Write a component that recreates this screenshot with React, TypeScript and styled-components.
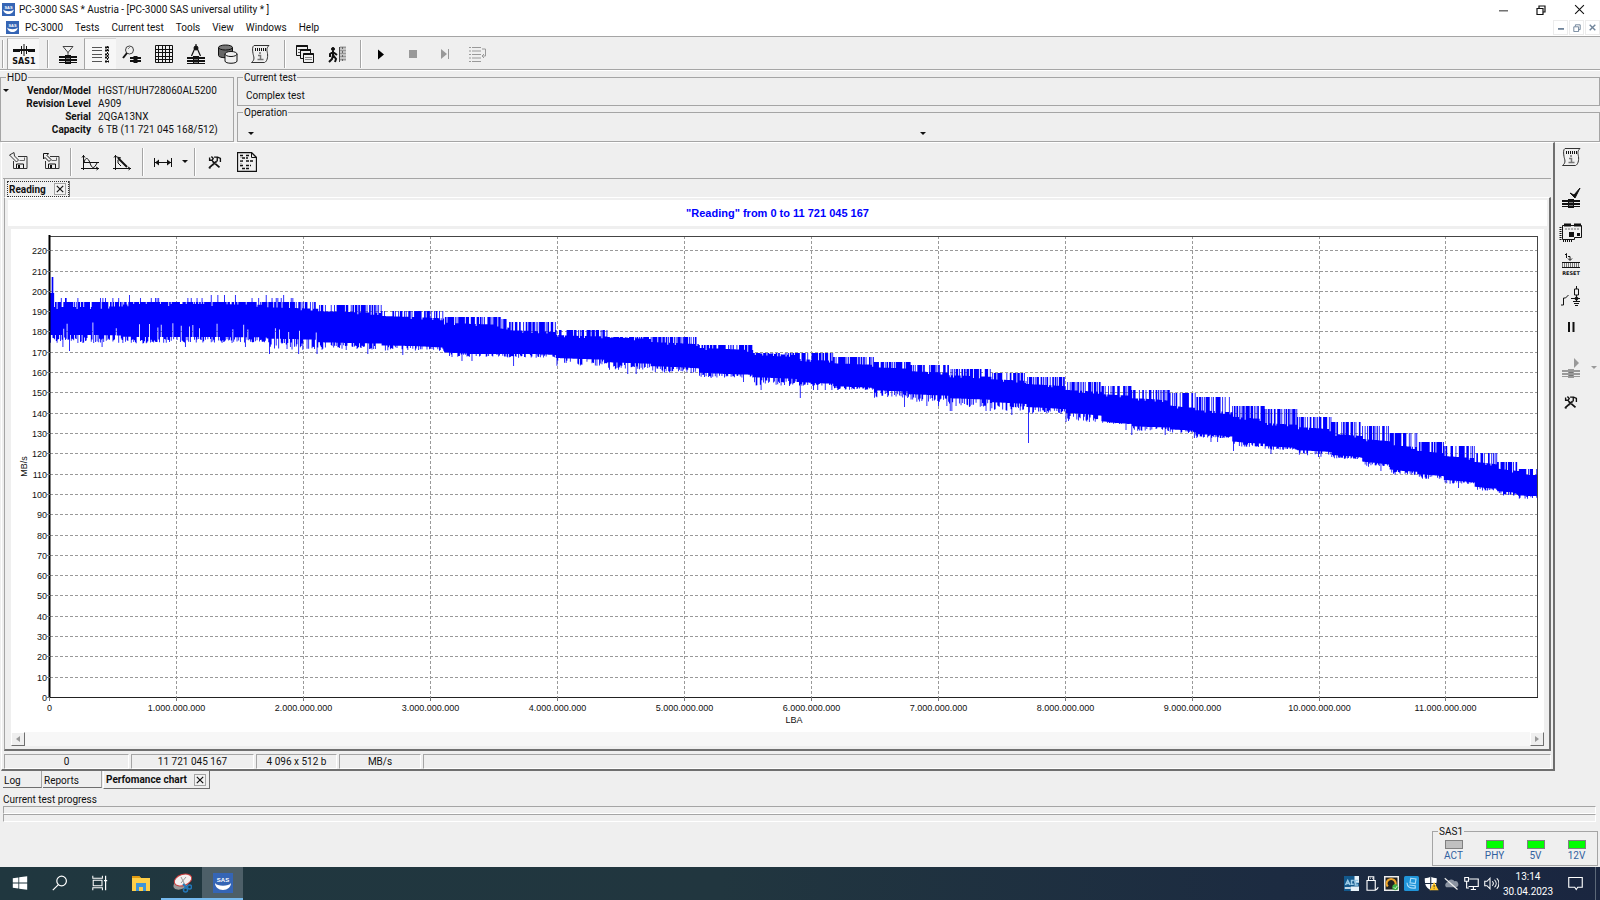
import React, { useLayoutEffect, useMemo, useRef, useState } from 'react';
import styled, { createGlobalStyle, css } from 'styled-components';

const UI = 'Roboto, "Open Sans", sans-serif';
const PLOT_FONT = '"Liberation Sans", Arial, sans-serif';
const FACE = '#efefef';
const LINE = '#a5a5a5';
const DARK = '#6f6f6f';

const GlobalStyle = createGlobalStyle`
  *, *::before, *::after { box-sizing: border-box; }
  body { margin: 0; background: ${FACE}; font-family: ${UI}; font-size: 10px; line-height: 13px; color: #111; }
  button, input { font: inherit; color: inherit; }
  button { border: 0; background: none; padding: 0; margin: 0; }
`;

const Window = styled.div`
  display: flex;
  flex-direction: column;
  min-height: 100vh;
`;

/* ---------- title and menu ---------- */
const TitleBar = styled.header`
  display: flex;
  align-items: center;
  height: 19px;
  padding: 0 4px 0 2px;
  gap: 4px;
  background: #fff;
`;
const Title = styled.h1`
  flex: 1;
  margin: 0;
  font-size: 10px;
  font-weight: 400;
`;
const WindowButton = styled.button`
  display: grid;
  place-items: center;
  width: 38px;
  height: 18px;
`;
const WindowButtons = styled.div`
  display: flex;
  margin-right: -2px;
`;
const MenuBar = styled.nav`
  display: flex;
  align-items: center;
  height: 17px;
  padding: 0 0 0 6px;
  background: #fff;
`;
const MenuItem = styled.button`
  padding: 0 6px;
  white-space: nowrap;
`;
const MdiButtons = styled.div`
  display: flex;
  gap: 1px;
  margin-left: auto;
`;
const MdiButton = styled.button`
  display: grid;
  place-items: center;
  width: 15px;
  height: 15px;
  border: 1px solid #ececec;
  color: #70849a;
`;

/* ---------- toolbars ---------- */
const ToolBar = styled.div`
  display: flex;
  align-items: center;
  height: 35px;
  border-top: 1px solid ${LINE};
  border-bottom: 1px solid #fff;
  box-shadow: inset 0 -1px 0 ${LINE};
  padding: 1px 0 1px 1px;
`;
const ToolGroup = styled.div`
  display: flex;
  align-items: center;
`;
const Divider = styled.div<{ $before?: number }>`
  width: 2px;
  height: 28px;
  margin: 0 3px 0 ${(p) => p.$before ?? 3}px;
  border-left: 1px solid ${LINE};
  border-right: 1px solid #fff;
`;
const ToolButton = styled.button<{ $pressed?: boolean; $width?: number }>`
  display: grid;
  place-items: center;
  width: ${(p) => p.$width ?? 32}px;
  height: 31px;
  ${(p) =>
    p.$pressed &&
    css`
      background: #f7f7f7;
      border-left: 1px solid ${LINE};
      border-top: 1px solid #d4d4d4;
    `}
`;

/* ---------- drive information ---------- */
const InfoRow = styled.section`
  display: flex;
  gap: 3px;
  height: 71px;
`;
const InfoColumn = styled.div`
  display: flex;
  flex: 1;
  flex-direction: column;
`;
const Group = styled.fieldset<{ $width?: number; $height: number }>`
  position: relative;
  width: ${(p) => (p.$width ? `${p.$width}px` : 'auto')};
  height: ${(p) => p.$height}px;
  min-width: 0;
  margin: 0;
  padding: 0 6px;
  border: 1px solid ${LINE};
`;
const Legend = styled.legend`
  padding: 0 1px;
  margin-left: -1px;
  line-height: 13px;
`;
const DriveGrid = styled.dl`
  display: grid;
  grid-template-columns: 84px 1fr;
  column-gap: 7px;
  margin: 0;
  dt { font-weight: 700; text-align: right; white-space: nowrap; }
  dd { margin: 0; white-space: nowrap; }
`;
const DropMark = styled.button`
  position: absolute;
  left: 1px;
  top: 3px;
  width: 8px;
  height: 8px;
  display: grid;
  place-items: center;
`;
const TestName = styled.div`
  padding: 5px 2px;
`;
const OperationRow = styled.div`
  display: grid;
  grid-template-columns: 1fr 1fr;
  padding: 13px 1px 0 4px;
`;

/* ---------- work area ---------- */
const Body = styled.main`
  display: flex;
  flex: 1;
`;
const Panel = styled.section`
  display: flex;
  flex: 1;
  flex-direction: column;
  min-width: 0;
  border: 2px solid ${DARK};
  border-top: 1px solid #fff;
  border-left: 1px solid #fff;
  padding: 0 2px;
  margin-left: 1px;
`;
const ChartTools = styled.div`
  display: flex;
  align-items: center;
  height: 36px;
  padding-top: 3px;
  margin-left: -1px;
  border-bottom: 1px solid ${LINE};
`;
const ChartTabs = styled.div`
  display: flex;
  height: 18px;
  padding: 2px 3px 0 2px;
  border-left: 1px solid ${LINE};
`;
const ChartTab = styled.div`
  display: flex;
  align-items: center;
  gap: 8px;
  padding: 0 2px 0 1px;
  border: 1px dotted #333;
  box-shadow: 1px 0 0 ${DARK};
  font-weight: 700;
`;
const CloseButton = styled.button`
  display: grid;
  place-items: center;
  width: 12px;
  height: 12px;
  border: 1px solid ${LINE};
  background: #f3f3f3;
`;
const ChartFrame = styled.div`
  display: flex;
  flex: 1;
  flex-direction: column;
  padding: 2px 2px 3px 3px;
  border: 2px solid ${DARK};
  border-left: 1px solid ${LINE};
  border-top: 1px solid #fff;
`;
const ChartTitle = styled.h2`
  margin: 0;
  height: 26px;
  background: #fff;
  color: #0000ff;
  font: 700 11px/26px ${PLOT_FONT};
  text-align: center;
`;
const PlotArea = styled.div`
  flex: 1;
  min-height: 160px;
  margin: 3px 3px 0;
  background: #fff;
  contain: size;
`;
const PlotSvg = styled.svg`
  display: block;
`;
const ScrollTrack = styled.div`
  display: flex;
  justify-content: space-between;
  height: 14px;
  margin: 0 3px;
  background: #f7f7f7;
`;
const ScrollButton = styled.button`
  display: grid;
  place-items: center;
  width: 14px;
  height: 14px;
  background: ${FACE};
  border: 1px solid #fff;
  border-right-color: ${DARK};
  border-bottom-color: ${DARK};
`;
const StatusBar = styled.footer`
  display: flex;
  gap: 2px;
  height: 15px;
  margin-top: 3px;
`;
const StatusCell = styled.div<{ $width?: number }>`
  flex: ${(p) => (p.$width ? `0 0 ${p.$width}px` : '1')};
  border: 1px solid ${LINE};
  border-right-color: #fff;
  border-bottom-color: #fff;
  text-align: center;
`;
const SideBar = styled.aside`
  display: flex;
  flex-direction: column;
  align-items: flex-start;
  width: 45px;
  border-top: 1px solid #fff;
`;
const SideButton = styled.button<{ $height: number; $wide?: boolean }>`
  display: flex;
  align-items: center;
  justify-content: center;
  width: 32px;
  height: ${(p) => p.$height}px;
  ${(p) =>
    p.$wide &&
    css`
      justify-content: space-between;
      width: 45px;
      padding: 0 3px 0 6px;
    `}
`;

/* ---------- lower area ---------- */
const PageTabs = styled.div`
  display: flex;
  align-items: flex-start;
  height: 20px;
  padding-left: 3px;
  gap: 1px;
`;
const PageTab = styled.button<{ $width: number }>`
  display: flex;
  align-items: center;
  width: ${(p) => p.$width}px;
  height: 17px;
  padding: 2px 1px 0;
  border-bottom: 1px solid ${DARK};
  border-right: 1px solid ${LINE};
`;
const ActiveTabBox = styled.div`
  display: flex;
  align-items: center;
  justify-content: space-between;
  height: 18px;
  width: 107px;
  padding: 0 3px 0 2px;
  border-left: 1px solid #fff;
  border-right: 1px solid ${DARK};
  border-bottom: 1px solid ${DARK};
  font-weight: 700;
  white-space: nowrap;
`;
const ProgressBlock = styled.section`
  display: flex;
  flex-direction: column;
  padding: 2px 4px 0 3px;
`;
const ProgressLine = styled.div`
  height: 8px;
  border: 1px solid ${LINE};
  border-right-color: #fff;
  border-bottom-color: #fff;
`;
const IndicatorRow = styled.section`
  display: flex;
  justify-content: flex-end;
  padding: 3px 2px 1px;
`;
const IndicatorList = styled.ul`
  display: grid;
  grid-template-columns: repeat(4, 41px);
  margin: 0 -6px;
  padding: 2px 0 0;
  list-style: none;
  color: #315f9f;
`;
const Indicator = styled.li<{ $on: boolean }>`
  display: flex;
  flex-direction: column;
  align-items: center;
  line-height: 14px;
  &::before {
    content: '';
    width: 18px;
    height: 9px;
    border: 1px solid #808080;
    background: ${(p) => (p.$on ? '#00ff00' : '#c0c0c0')};
  }
`;
const TaskBar = styled.footer`
  display: flex;
  align-items: stretch;
  height: 33px;
  background: linear-gradient(90deg, #20373f 0%, #21363f 45%, #1c2b41 80%, #1a2640 100%);
  color: #fff;
`;
const TaskButton = styled.button<{ $open?: boolean; $active?: boolean }>`
  display: grid;
  place-items: center;
  width: 40px;
  border-bottom: 2px solid ${(p) => (p.$open ? '#76b9ed' : 'transparent')};
  background: ${(p) => (p.$active ? '#4d5f68' : 'transparent')};
  &:nth-of-type(n + 4) {
    width: 41px;
  }
`;
const Tray = styled.div`
  display: flex;
  align-items: center;
  margin-left: auto;
`;
const TrayButton = styled.button<{ $width?: number }>`
  display: grid;
  place-items: center;
  width: ${(p) => p.$width ?? 20}px;
  height: 33px;
`;
const Clock = styled.time`
  width: 54px;
  line-height: 15px;
  text-align: center;
`;
const ShowDesktop = styled.button`
  width: 5px;
  height: 33px;
  border-left: 1px solid #5c6878;
`;

/* ---------- icons ---------- */
type IconProps = { size?: number; children: React.ReactNode; color?: string };
const Icon = ({ size = 20, children, color = '#111' }: IconProps) => (
  <svg width={size} height={size} viewBox="0 0 20 20" fill="none" stroke={color} strokeWidth="1" aria-hidden="true">
    {children}
  </svg>
);
const Stack = ({ y = 11, x = 1, w = 18, color = '#111' }: { y?: number; x?: number; w?: number; color?: string }) => (
  <g stroke="none" fill={color}>
    <rect x={x} y={y} width={w} height="2" />
    <rect x={x} y={y + 3} width={w} height="2" />
    <rect x={x} y={y + 6} width={w} height="1" />
    <rect x={x + w / 2 - 3} y={y - 1} width="6" height="9" />
    <rect x={x + w / 2 - 2} y={y + 2} width="4" height="1" fill="#777" />
    <rect x={x + w / 2 - 2} y={y + 5} width="4" height="1" fill="#777" />
  </g>
);
const AppLogo = ({ size }: { size: number }) => (
  <svg width={size} height={size} viewBox="0 0 20 20" aria-hidden="true">
    <rect width="20" height="20" fill="#3565b5" />
    <path d="M2 10c2 3.500 14 3.500 16 0c0 4-3.500 7-8 7s-8-3-8-7z" fill="#fff" />
    <text x="10" y="9" textAnchor="middle" fontSize="6" fontWeight="700" fontFamily="Liberation Sans, sans-serif" fill="#fff">SAS</text>
  </svg>
);
const SasPort = () => (
  <svg width="24" height="24" viewBox="0 0 24 24" aria-hidden="true">
    <path d="M1 8h22M12 2v12M9.500 4v8M14.500 4v8" stroke="#111" strokeWidth="1" />
    <path d="M1 8.500h7M16 8.500h7" stroke="#111" strokeWidth="3" />
    <path d="M7 8h10" stroke="#111" strokeWidth="2" />
    <text x="12" y="22" textAnchor="middle" fontSize="8" fontWeight="700" fontFamily="DejaVu Sans, sans-serif" fill="#111">SAS1</text>
  </svg>
);
const DriveDown = () => (
  <Icon><path d="M5 2.500h10l-5 6zM10 8v3" stroke="#444" /><Stack y={12} /></Icon>
);
const TestList = () => (
  <Icon>
    <path d="M1 3.500h10M1 6.500h10M1 10.500h10M1 13.500h10M1 17.500h10" stroke="#555" />
    <path d="M14 3.500h4M14 6.500h4M14 10.500h4M14 13.500h4M14 17.500h4" strokeWidth="2" strokeDasharray="2 1" />
    <path d="M16.500 2v16" strokeDasharray="2 1" />
  </Icon>
);
const Lens = () => (
  <Icon>
    <circle cx="7.500" cy="6" r="4" stroke="#444" /><path d="M5 9l-4 5" strokeWidth="2" />
    <path d="M6 5l2-2" stroke="#888" />
    <path d="M8 14h11M8 17h11" strokeWidth="2" /><path d="M13.500 12v7" strokeWidth="4" />
  </Icon>
);
const GridIcon = () => (
  <Icon>
    <path d="M1.500 1.500h17v17h-17zM1.500 5.500h17M1.500 8.500h17M1.500 12.500h17M1.500 15.500h17M4.500 1.500v17M8.500 1.500v17M11.500 1.500v17M15.500 1.500v17" />
  </Icon>
);
const Compass = () => (
  <Icon><path d="M10 0v3M9 4L5.500 12M11 4l3.500 8" strokeWidth="1.200" /><circle cx="10" cy="4" r="2" fill="#111" /><Stack y={13} /></Icon>
);
const Disks = () => (
  <Icon>
    <path d="M.5 3.500v8c0 3 14 3 14 0v-8" fill="#666" /><ellipse cx="7.500" cy="3.500" rx="7" ry="2.500" fill="#777" />
    <path d="M7 10v7c0 3 12 3 12 0v-7" fill="#efefef" /><ellipse cx="13" cy="10" rx="6" ry="2.500" fill="#efefef" />
  </Icon>
);
const Scroll = () => (
  <Icon>
    <path d="M4 1.500h15c-3 3-2 5-1.500 8c.5 4-.5 8-3 9H1.500c4-3 2-6 1.500-9c-.5-3-1-7 1-8z" stroke="#333" />
    <path d="M5 5.500h11" strokeWidth="3" strokeDasharray="1 1" />
    <path d="M10 8v2M8 11.500h2.500v4M7.500 15.500h6" stroke="#777" strokeWidth="1.500" />
  </Icon>
);
const Pages = () => (
  <Icon>
    <path d="M1.500 1.500h11v10h-11z" fill="#efefef" />
    <path d="M1.500 2h11" strokeWidth="2" /><path d="M3 5.500h4M3 8.500h2" stroke="#555" />
    <path d="M5.500 5.500h10v9h-10z" fill="#efefef" /><path d="M5.500 6h10" strokeWidth="2" />
    <path d="M8.500 9.500h10v9h-10z" fill="#efefef" /><path d="M8.500 10h10" strokeWidth="2" />
    <path d="M10 13.500h7M10 15.500h7" stroke="#888" />
  </Icon>
);
const Exit = () => (
  <Icon>
    <circle cx="6" cy="5" r="1.500" fill="#111" />
    <path d="M6 7v5M6 11l3 4-1 3M6 11l-1 4-3 3M6 8L3 10v3M6 8l4 3" strokeWidth="2" />
    <path d="M13 3.500h6M13 6.500h6M13 9.500h6M13 12.500h6M13 15.500h6" stroke="#999" strokeWidth="2" />
    <path d="M12.500 3v15" stroke="#444" /><path d="M15.500 3v15" stroke="#666" strokeDasharray="2 2" />
  </Icon>
);
const Play = () => <Icon><path d="M7 5.500l6 5-6 5z" fill="#000" stroke="none" /></Icon>;
const Stop = () => <Icon><path d="M6 6h8v8H6z" fill="#999" stroke="none" /></Icon>;
const Next = () => <Icon color="#999"><path d="M6 5l6 5-6 5z" fill="#999" stroke="none" /><path d="M13.500 5v10" /></Icon>;
const Queue = () => (
  <Icon color="#999">
    <path d="M5 3.500h9M5 7h9M5 10.500h9M5 14h9M5 17.500h9" /><path d="M2 3.500h2M2 7h2M2 10.500h2M2 14h2M2 17.500h2" />
    <path d="M15 5h3.500v7H15M17 10l-2 2 2 2" />
  </Icon>
);
const Disk = ({ flip }: { flip?: boolean }) => (
  <Icon>
    <path d="M9 4.500h9v12H4.500V9" stroke="#333" /><path d="M7.500 16v-4h7v4" /><path d="M10 13v3" strokeWidth="2" /><path d="M10.500 8.500h5v-3" stroke="#666" />
    {flip ? <path d="M2.500 1.500h5l-1.500 2 4 4-2 2-4-4-1.500 1.500z" fill="#efefef" /> : <path d="M5 .5L.5 3l3 3 4 4 2-2-4-4z" fill="#efefef" stroke="#333" />}
  </Icon>
);
const WaveChart = () => <Icon><path d="M2.500 3v15M0 16.500h18M1 5.500l1.500-2L4 5.500M15 15l2.500 1.500-2 1.500" /><path d="M3 11c1-6 4-6 6 0s4 6 7 0M3 10.500h15" /></Icon>;
const FallChart = () => <Icon><path d="M2.500 3v15M0 16.500h18M1 5.500l1.500-2L4 5.500M15 15l2.500 1.500-2 1.500" /><path d="M5 6l9 9" strokeWidth="2" /><path d="M4 5l4 1M5 8v3l3 3" /></Icon>;
const Range = () => <Icon><path d="M1.500 6v9M18.500 6v9M2 10.500h16" /><path d="M2 10.500l4-3v6zM18 10.500l-4-3v6z" fill="#111" stroke="none" /></Icon>;
const Tools = () => (
  <Icon size={18}>
    <path d="M4 16l8-7M15 16L7 9" strokeWidth="2" /><path d="M8 14l5-5" stroke="#666" />
    <path d="M4 5v3h3l1-2-2-2M3 16l2 1" strokeWidth="1.500" />
    <path d="M9 4.500h4l3 1.500v4M12.500 5v4" strokeWidth="1.500" />
  </Icon>
);
const Report = () => (
  <Icon>
    <path d="M.5.500h14l5 5v14H.5z" strokeWidth="1.300" /><path d="M14.500.5v5h5" />
    <path d="M3 3.500h4M9 3.500h3M5 6h6M3 9h3M9 9h7M3 13.500h4M9 13.500h5M5 16.500h8" strokeWidth="1.500" strokeDasharray="3 1" />
    <path d="M4 5v12" stroke="#888" strokeDasharray="1 2" />
  </Icon>
);
const Arrow = ({ color = '#111' }: { color?: string }) => (
  <svg width="6" height="4" viewBox="0 0 6 4" aria-hidden="true"><path d="M0 0h6L3 3z" fill={color} /></svg>
);
const DriveCheck = () => <Icon><path d="M9 5l4 2 6-7-5 10z" fill="#111" /><Stack y={12} /></Icon>;
const Board = () => (
  <svg width="24" height="20" viewBox="0 0 24 20" fill="none" stroke="#111" aria-hidden="true">
    <path d="M3.500 2.500h19v12h-7v2h-12z" /><path d="M5 2h7M15 2h7" strokeWidth="3" />
    <path d="M1.500 4v13M4 18h10" strokeWidth="2" strokeDasharray="1 1" />
    <path d="M10 9h5v5h-5zM18 10h3v3h-3z" fill="#111" stroke="none" />
    <path d="M6 6h14" strokeDasharray="2 1" stroke="#777" />
  </svg>
);
const Reset = () => (
  <svg width="20" height="22" viewBox="0 0 20 22" fill="none" stroke="#111" aria-hidden="true">
    <path d="M4 2l1.500-1.500V5M7 3.500h2V7M7 5.500l2 2 2-2" /><path d="M1 9.500h18M1 14.500h18" /><path d="M1 12h18" strokeWidth="4" strokeDasharray="1 1" stroke="#777" />
    <text x="10" y="22" textAnchor="middle" fontSize="5" fontWeight="700" fontFamily="DejaVu Sans, sans-serif" fill="#111" stroke="none">RESET</text>
  </svg>
);
const Power = () => (
  <Icon><path d="M0 19h2.500v-7h2l3-3M10 12.500h9M15.500 0v3M15.500 9v7M12 15.500h7M13 17.500h5M14 19.500h3" /><path d="M13.500 3h4v6h-4z" /><circle cx="15.500" cy="12.500" r="1.500" fill="#111" /></Icon>
);
const Pause = () => <Icon><path d="M8 5v10M12.500 5v10" strokeWidth="2" /></Icon>;
const DrivePlay = () => <Icon color="#999"><path d="M13 0l5 5-5 5z" fill="#999" stroke="none" /><Stack y={12} color="#999" /></Icon>;
const Cross = ({ size = 8, width = 1.5 }: { size?: number; width?: number }) => (
  <svg width={size} height={size} viewBox="0 0 10 10" stroke="currentColor" strokeWidth={width} aria-hidden="true"><path d="M1 1l8 8M9 1l-8 8" /></svg>
);
const Restore = ({ size }: { size: number }) => (
  <svg width={size} height={size} viewBox="0 0 10 10" fill="none" stroke="currentColor" strokeWidth="1.200" aria-hidden="true"><path d="M1 3.500h6V9.500H1zM3 3V1h6v6H7" /></svg>
);
const Bar = ({ size, width = 1 }: { size: number; width?: number }) => (
  <svg width={size} height={size} viewBox="0 0 10 10" stroke="currentColor" strokeWidth={width} aria-hidden="true"><path d="M0 6.500h10" /></svg>
);

/* ---------- read speed chart ---------- */
// Each band: end position, spike ceiling, solid ceiling, solid floor, dip floor.
const FULL_W = 1489;
const FULL_H = 461;
const BANDS: number[][] = [
  [71, 66, 71, 99, 107], [100, 66, 68, 101, 108], [216, 66, 68, 101, 107], [268, 66, 72, 103, 114],
  [331, 69, 76, 107, 114], [394, 75, 81, 110, 115], [451, 81, 88, 118, 121], [459, 83, 91, 118, 122],
  [506, 86, 95, 118, 122], [557, 94, 100, 123, 130], [601, 101, 102, 127, 134], [649, 101, 107, 131, 137],
  [703, 109, 113, 138, 142], [747, 117, 118, 142, 150], [783, 117, 124, 147, 150], [824, 121, 128, 151, 154],
  [861, 126, 132, 155, 162], [899, 129, 136, 159, 166], [942, 133, 140, 163, 171], [977, 137, 144, 167, 175],
  [1016, 141, 149, 172, 178], [1052, 146, 155, 178, 186], [1082, 150, 159, 187, 188], [1120, 154, 163, 191, 195],
  [1146, 157, 171, 194, 197], [1183, 161, 175, 199, 202], [1215, 170, 182, 207, 211], [1248, 173, 188, 211, 214],
  [1282, 181, 192, 215, 221], [1313, 186, 199, 220, 223], [1340, 190, 204, 227, 231], [1368, 197, 210, 235, 239],
  [1394, 206, 216, 239, 243], [1425, 210, 221, 245, 248], [1448, 217, 227, 252, 255], [1469, 226, 234, 256, 260],
  [1489, 233, 239, 260, 263],
];
const DIPS: Record<number, number> = { 19: 115, 750: 162, 854: 171, 978: 207, 1076: 194, 1144: 202, 463: 130 };
const SAMPLES = 1786;

function buildTrace(width: number, height: number) {
  let seed = 3000;
  const rnd = () => {
    seed = (seed * 1664525 + 1013904223) >>> 0;
    return seed / 4294967296;
  };
  const sx = width / FULL_W;
  const sy = height / FULL_H;
  const step = FULL_W / SAMPLES;
  let band = 0;
  let d = '';
  for (let i = 0; i < SAMPLES; i++) {
    const x = i * step;
    while (band < BANDS.length - 1 && x > BANDS[band][0]) band++;
    const [end, peak, rawTop, rawFloor, dip] = BANDS[band];
    const start = band > 0 ? BANDS[band - 1][0] : 0;
    const t = (x - start) / (end - start) - 0.5;
    const near = BANDS[Math.max(0, Math.min(BANDS.length - 1, band + (t < 0 ? -1 : 1)))];
    const mix = Math.abs(t) * 0.4;
    const top = Math.max(peak, rawTop + (near[2] - rawTop) * mix);
    const floor = rawFloor + (near[3] - rawFloor) * mix;
    const early = x < 250;
    let y0 = rnd() < (early ? 0.78 : 0.58) ? peak : top + (rnd() < 0.15 ? 2 : 0);
    let y1 = rnd() < (early ? 0.6 : 0.5) ? Math.max(floor, floor + (dip - floor) * (0.3 + 0.7 * rnd())) : floor;
    if (early && rnd() < 0.1) y0 = peak - 4;
    if (early && rnd() < 0.02) y0 = peak - 7;
    if (x < 270 && rnd() < 0.08) y1 = floor - 6 - 8 * rnd();
    if (rnd() < 0.012) y1 = dip + 4;
    const forced = DIPS[Math.floor(x)];
    if (forced) y1 = forced;
    if (x > 1 && x < 3) y0 = 41;
    else if (x < 4) y0 = 57;
    d += `M${(x * sx).toFixed(2)} ${(y0 * sy).toFixed(1)}h${(step * sx).toFixed(2)}V${(y1 * sy).toFixed(1)}h-${(step * sx).toFixed(2)}z`;
  }
  return d;
}

function SpeedChart() {
  const box = useRef<HTMLDivElement>(null);
  const [size, setSize] = useState({ w: 1533, h: 503 });
  useLayoutEffect(() => {
    const el = box.current;
    if (!el) return;
    const read = () => setSize({ w: el.clientWidth, h: el.clientHeight });
    read();
    const watcher = new ResizeObserver(read);
    watcher.observe(el);
    return () => watcher.disconnect();
  }, []);
  const left = 39;
  const top = 7;
  const w = size.w - left - 6;
  const h = size.h - top - 35;
  const trace = useMemo(() => buildTrace(w, h), [w, h]);
  const yOf = (v: number) => Math.round(top + h - (v * h) / 227) + 0.5;
  const xOf = (v: number) => Math.round(left + (v * w) / 11.721) - 0.5;
  const speeds = Array.from({ length: 23 }, (_, i) => i * 10);
  const blocks = Array.from({ length: 12 }, (_, i) => i);
  return (
    <PlotArea ref={box}>
      <PlotSvg width={size.w} height={size.h} fontFamily={PLOT_FONT} fontSize="9" fill="#111" role="img" aria-label="Reading speed by LBA">
        <g stroke="#999" strokeDasharray="3 2">
          {speeds.slice(1).map((v) => <line key={v} x1={left} x2={left + w} y1={yOf(v)} y2={yOf(v)} />)}
          {blocks.slice(1).map((v) => <line key={v} x1={xOf(v)} x2={xOf(v)} y1={top} y2={top + h} />)}
        </g>
        <path d={trace} transform={`translate(${left} ${top})`} fill="#0000ff" />
        <path d={`M${left} ${top + 0.5}H${left + w}M${left + w - 0.5} ${top}V${top + h}`} stroke="#444" fill="none" />
        <path d={`M${left} ${top + h + 0.5}H${left + w}`} stroke="#222" strokeWidth="1" />
        <path d={`M${left - 0.5} ${top - 1}V${top + h + 1}`} stroke="#000" strokeWidth="2" />
        {speeds.map((v) => (
          <g key={v}>
            <path d={`M${left - 3} ${yOf(v)}h3`} stroke="#777" />
            <text x={left - 3} y={yOf(v) + 3} textAnchor="end">{v}</text>
          </g>
        ))}
        {blocks.map((v) => (
          <g key={v}>
            <path d={`M${xOf(v)} ${top + h}v4`} stroke="#777" />
            <text x={xOf(v)} y={top + h + 14} textAnchor="middle">{v === 0 ? '0' : `${v}.000.000.000`}</text>
          </g>
        ))}
        <text x={left + w / 2} y={top + h + 26} textAnchor="middle">LBA</text>
        <text transform={`translate(16 ${top + h / 2}) rotate(-90)`} textAnchor="middle">MB/s</text>
      </PlotSvg>
    </PlotArea>
  );
}

/* ---------- taskbar icons ---------- */
const WinLogo = () => <Icon size={16} color="none"><path d="M1 4l7-1v6.500H1zM9 2.800L19 1.500v8H9zM1 10.500h7V17l-7-1zM9 10.500h10v8l-10-1.300z" fill="#fff" /></Icon>;
const Search = () => <Icon size={16} color="#fff"><circle cx="12" cy="7.500" r="6" strokeWidth="1.500" /><path d="M8 12l-7 7" strokeWidth="1.500" /></Icon>;
const TaskView = () => <Icon size={16} color="#fff"><path d="M1 1v3h12V1M1 19v-3h12v3M1.500 6.500h11v7h-11z" strokeWidth="1.300" /><path d="M17 1v18M15 7h4" strokeWidth="1.500" /></Icon>;
const Folder = () => <Icon color="none"><path d="M1 3h7l2 2h9v13H1z" fill="#ffcf48" /><path d="M1 3h7l2 2H1z" fill="#e09a10" /><path d="M5 18v-8h10v8h-3v-4H8v4z" fill="#3f95d8" /></Icon>;
const Snip = () => (
  <Icon color="none"><ellipse cx="9" cy="11" rx="8" ry="5" fill="#999" transform="rotate(-25 9 11)" /><ellipse cx="11" cy="7" rx="9" ry="5.500" fill="#f5f0f0" stroke="#c83a3a" transform="rotate(-20 11 7)" /><path d="M9 4l4 8M14 4L9 10" stroke="#999" /><path d="M11 11l4 4" stroke="#2477b8" strokeWidth="2" /><circle cx="13.500" cy="17" r="2" stroke="#2477b8" strokeWidth="1.500" /><circle cx="17.500" cy="14" r="2" stroke="#2477b8" strokeWidth="1.500" /></Icon>
);
const TRAY: { name: string; art: React.ReactNode }[] = [
  { name: 'ACE utility', art: <><rect width="20" height="20" fill="#13598c" /><path d="M14 0h6v9h-6zM9 14h11v6H9z" fill="#e8f2f8" /><path d="M2 12l3-6 3 6M3 10h5M13 6h-3v5h3M19 6h-4v6h4M15 9h3" stroke="#9ccbe6" strokeWidth="2" /><path d="M1 16h8" stroke="#fff" strokeWidth="2" /></> },
  { name: 'Safely remove hardware', art: <path d="M6 6V1h7v5M4 6h11v13H4zM8 3h1M11 3h1M14 19c3 0 4-2 5-4" stroke="#fff" strokeWidth="1.500" /> },
  { name: 'Drive monitor', art: <><rect x="1" y="1" width="18" height="18" fill="#222" stroke="#eee" strokeWidth="2" /><path d="M5 14a6 6 0 1 1 9 0" stroke="#eda52b" strokeWidth="3" /><circle cx="15" cy="15" r="4" fill="#3cb043" /><path d="M13 15l2 2 3-4" stroke="#fff" /></> },
  { name: 'Remote session', art: <><rect width="20" height="20" rx="2" fill="#2094d8" /><path d="M9 3l7 1-1 6-7-1zM4 9c0 6 4 8 12 7M7 12l8 1v3" stroke="#a9dcfa" strokeWidth="1.500" /></> },
  { name: 'Security', art: <><path d="M1 3c3 0 6-1 8-2c2 1 5 2 8 2c0 8-1 12-8 16C2 15 1 11 1 3z" fill="#fff" /><path d="M9 1v18M1 10h16" stroke="#1b2a41" strokeWidth="1.500" /><path d="M13.500 8l6 11h-12z" fill="#ffc629" /><path d="M13.500 12v3M13.500 16.500v1" stroke="#222" /></> },
  { name: 'Cloud storage', art: <><path d="M3 15a4 4 0 0 1 2-7a5 5 0 0 1 9-1a4 4 0 0 1 2 8z" fill="#8b94a2" /><path d="M1 3l17 15" stroke="#eee" strokeWidth="1.500" /></> },
  { name: 'Network', art: <path d="M7 4h12v10H6M12.500 14v4M9 18h7M1 2h5v5H1zM3.500 7v9h3" stroke="#fff" strokeWidth="1.500" /> },
  { name: 'Volume', art: <path d="M1 7h3l4-4v14l-4-4H1zM11 7c2 2 2 4 0 6M14 5c3 3 3 7 0 10M17 3c4 4 4 10 0 14" stroke="#fff" strokeWidth="1.400" /> },
];

const MENUS = ['PC-3000', 'Tests', 'Current test', 'Tools', 'View', 'Windows', 'Help'];
const DRIVE = [
  ['Vendor/Model', 'HGST/HUH728060AL5200'],
  ['Revision Level', 'A909'],
  ['Serial', '2QGA13NX'],
  ['Capacity', '6 TB (11 721 045 168/512)'],
];

export default function App() {
  return (
    <>
      <GlobalStyle />
      <Window>
        <TitleBar>
          <AppLogo size={13} />
          <Title>PC-3000 SAS * Austria - [PC-3000 SAS universal utility * ]</Title>
          <WindowButtons>
            <WindowButton aria-label="Minimize"><Bar size={9} /></WindowButton>
            <WindowButton aria-label="Restore"><Restore size={10} /></WindowButton>
            <WindowButton aria-label="Close"><Cross size={11} width={1} /></WindowButton>
          </WindowButtons>
        </TitleBar>
        <MenuBar>
          <AppLogo size={13} />
          {MENUS.map((m) => <MenuItem key={m}>{m}</MenuItem>)}
          <MdiButtons>
            <MdiButton aria-label="Minimize document"><Bar size={6} width={3} /></MdiButton>
            <MdiButton aria-label="Restore document"><Restore size={8} /></MdiButton>
            <MdiButton aria-label="Close document"><Cross size={7} width={2} /></MdiButton>
          </MdiButtons>
        </MenuBar>
        <ToolBar>
          <Divider $before={1} />
          <ToolGroup>
            <ToolButton $pressed aria-label="Port SAS1"><SasPort /></ToolButton>
          </ToolGroup>
          <Divider $before={8} />
          <ToolGroup>
            <ToolButton aria-label="Drive start"><DriveDown /></ToolButton>
            <ToolButton $pressed aria-label="Test list"><TestList /></ToolButton>
            <ToolButton aria-label="Inspect drive"><Lens /></ToolButton>
            <ToolButton aria-label="Sector grid"><GridIcon /></ToolButton>
            <ToolButton aria-label="Geometry"><Compass /></ToolButton>
            <ToolButton aria-label="Copy data"><Disks /></ToolButton>
            <ToolButton aria-label="Script"><Scroll /></ToolButton>
          </ToolGroup>
          <Divider $before={8} />
          <ToolGroup>
            <ToolButton aria-label="Windows"><Pages /></ToolButton>
            <ToolButton aria-label="Exit"><Exit /></ToolButton>
          </ToolGroup>
          <Divider $before={7} />
          <ToolGroup>
            <ToolButton aria-label="Run"><Play /></ToolButton>
            <ToolButton aria-label="Stop"><Stop /></ToolButton>
            <ToolButton aria-label="Skip"><Next /></ToolButton>
            <ToolButton aria-label="Queue"><Queue /></ToolButton>
          </ToolGroup>
        </ToolBar>
        <InfoRow>
          <Group $width={234} $height={71}>
            <Legend>HDD</Legend>
            <DropMark aria-label="Drive menu"><Arrow /></DropMark>
            <DriveGrid>
              {DRIVE.map(([k, v]) => (
                <React.Fragment key={k}><dt>{k}</dt><dd>{v}</dd></React.Fragment>
              ))}
            </DriveGrid>
          </Group>
          <InfoColumn>
            <Group $height={35}><Legend>Current test</Legend><TestName>Complex test</TestName></Group>
            <Group $height={36}>
              <Legend>Operation</Legend>
              <OperationRow><Arrow /><Arrow /></OperationRow>
            </Group>
          </InfoColumn>
        </InfoRow>
        <Body>
          <Panel>
            <ChartTools>
              <ToolButton aria-label="Open chart"><Disk /></ToolButton>
              <ToolButton aria-label="Save chart"><Disk flip /></ToolButton>
              <Divider />
              <ToolButton aria-label="Waveform"><WaveChart /></ToolButton>
              <ToolButton aria-label="Slope"><FallChart /></ToolButton>
              <Divider />
              <ToolButton aria-label="Range"><Range /></ToolButton>
              <ToolButton $width={12} aria-label="Range options"><Arrow /></ToolButton>
              <Divider />
              <ToolButton aria-label="Settings"><Tools /></ToolButton>
              <ToolButton aria-label="Report"><Report /></ToolButton>
            </ChartTools>
            <ChartTabs>
              <ChartTab>Reading <CloseButton aria-label="Close Reading"><Cross /></CloseButton></ChartTab>
            </ChartTabs>
            <ChartFrame>
              <ChartTitle>"Reading" from 0 to 11 721 045 167</ChartTitle>
              <SpeedChart />
              <ScrollTrack>
                <ScrollButton aria-label="Scroll left"><svg width="4" height="6" viewBox="0 0 4 6"><path d="M4 0v6L0 3z" fill="#999" /></svg></ScrollButton>
                <ScrollButton aria-label="Scroll right"><svg width="4" height="6" viewBox="0 0 4 6"><path d="M0 0v6l4-3z" fill="#999" /></svg></ScrollButton>
              </ScrollTrack>
            </ChartFrame>
            <StatusBar>
              <StatusCell $width={125}>0</StatusCell>
              <StatusCell $width={123}>11 721 045 167</StatusCell>
              <StatusCell $width={81}>4 096 x 512 b</StatusCell>
              <StatusCell $width={82}>MB/s</StatusCell>
              <StatusCell />
            </StatusBar>
          </Panel>
          <SideBar>
            <SideButton $height={28} aria-label="Script"><Scroll /></SideButton>
            <SideButton $height={54} aria-label="Drive check"><DriveCheck /></SideButton>
            <SideButton $height={16} aria-label="Controller board"><Board /></SideButton>
            <SideButton $height={46} aria-label="Reset"><Reset /></SideButton>
            <SideButton $height={18} aria-label="Power"><Power /></SideButton>
            <SideButton $height={44} aria-label="Pause"><Pause /></SideButton>
            <SideButton $height={38} $wide aria-label="Start drive"><DrivePlay /><Arrow color="#999" /></SideButton>
            <SideButton $height={30} aria-label="Settings"><Tools /></SideButton>
          </SideBar>
        </Body>
        <PageTabs>
          <PageTab $width={39}>Log</PageTab>
          <PageTab $width={59}>Reports</PageTab>
          <ActiveTabBox>Perfomance chart <CloseButton aria-label="Close Perfomance chart"><Cross /></CloseButton></ActiveTabBox>
        </PageTabs>
        <ProgressBlock>
          <span id="progress-label">Current test progress</span>
          <ProgressLine role="progressbar" aria-labelledby="progress-label" />
          <ProgressLine />
        </ProgressBlock>
        <IndicatorRow>
          <Group $width={166} $height={41}>
            <Legend>SAS1</Legend>
            <IndicatorList>
              <Indicator $on={false}>ACT</Indicator>
              <Indicator $on>PHY</Indicator>
              <Indicator $on>5V</Indicator>
              <Indicator $on>12V</Indicator>
            </IndicatorList>
          </Group>
        </IndicatorRow>
        <TaskBar>
          <TaskButton aria-label="Start"><WinLogo /></TaskButton>
          <TaskButton aria-label="Search"><Search /></TaskButton>
          <TaskButton aria-label="Task view"><TaskView /></TaskButton>
          <TaskButton aria-label="Files"><Folder /></TaskButton>
          <TaskButton $open aria-label="Snipping tool"><Snip /></TaskButton>
          <TaskButton $open $active aria-label="PC-3000 SAS"><AppLogo size={20} /></TaskButton>
          <Tray>
            {TRAY.map((t) => <TrayButton key={t.name} aria-label={t.name}><Icon size={15} color="none">{t.art}</Icon></TrayButton>)}
            <Clock>13:14<br />30.04.2023</Clock>
            <TrayButton $width={40} aria-label="Notifications"><Icon size={15} color="#fff"><path d="M1 2h18v13h-6l-2 3-2-3H1z" strokeWidth="1.500" /></Icon></TrayButton>
            <ShowDesktop aria-label="Show desktop" />
          </Tray>
        </TaskBar>
      </Window>
    </>
  );
}
